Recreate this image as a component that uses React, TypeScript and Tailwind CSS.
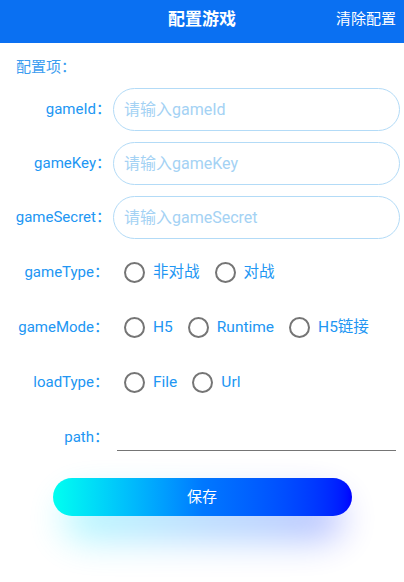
import React from "react";

const font = { fontFamily: 'Roboto, "Noto Sans CJK SC", sans-serif' };

function Radio({ label, mr }: { label: string; mr?: string }) {
  return (
    <div className={`flex items-center ${mr ?? ""}`}>
      <div className="w-[21px] h-[21px] rounded-full border-2 border-[#757575] shrink-0" />
      <span className="ml-[8px] text-[15.5px] text-[#2196f3] leading-none">{label}</span>
    </div>
  );
}

function InputRow({ label, placeholder }: { label: string; placeholder: string }) {
  return (
    <div className="flex items-center h-[43px]">
      <div className="w-[113px] text-right text-[15px] text-[#2196f3] whitespace-nowrap pr-[2px]">{label}：</div>
      <div className="mr-[4px] flex-1 h-full rounded-full border border-[#b3dbf7] flex items-center pl-[10px] text-[16px] text-[#a4d2f4]">
        {placeholder}
      </div>
    </div>
  );
}

export default function App() {
  return (
    <div className="w-[404px] h-[582px] bg-white overflow-hidden" style={font}>
      <div className="relative h-[43px] bg-[#0a70f2] flex items-center justify-center">
        <span className="text-white text-[17px] font-bold -mt-[4px]">配置游戏</span>
        <span className="absolute right-[8px] top-0 h-full flex items-center text-white text-[15px] -mt-[2px]">清除配置</span>
      </div>
      <div className="pl-[16px] pt-[14px] text-[15px] text-[#3a9cf0] leading-[20px]">配置项：</div>
      <div className="mt-[11px] flex flex-col gap-[11px]">
        <InputRow label="gameId" placeholder="请输入gameId" />
        <InputRow label="gameKey" placeholder="请输入gameKey" />
        <InputRow label="gameSecret" placeholder="请输入gameSecret" />
      </div>
      <div className="mt-[6px]">
        <div className="flex items-center h-[55px]">
          <div className="w-[113px] text-right text-[15px] text-[#2196f3] pr-[4px]">gameType：</div>
          <div className="flex items-center pl-[11px]">
            <Radio label="非对战" mr="mr-[15px]" />
            <Radio label="对战" />
          </div>
        </div>
        <div className="flex items-center h-[55px]">
          <div className="w-[113px] text-right text-[15px] text-[#2196f3] pr-[4px]">gameMode：</div>
          <div className="flex items-center pl-[11px]">
            <Radio label="H5" mr="mr-[15px]" />
            <Radio label="Runtime" mr="mr-[15px]" />
            <Radio label="H5链接" />
          </div>
        </div>
        <div className="flex items-center h-[55px]">
          <div className="w-[113px] text-right text-[15px] text-[#2196f3] pr-[4px]">loadType：</div>
          <div className="flex items-center pl-[11px]">
            <Radio label="File" mr="mr-[15px]" />
            <Radio label="Url" />
          </div>
        </div>
        <div className="flex items-center h-[55px]">
          <div className="w-[113px] text-right text-[15px] text-[#2196f3] pr-[4px]">path：</div>
          <div className="ml-[4px] mr-[8px] flex-1 h-[24px] mt-[2px] border-b border-[#757575]" />
        </div>
      </div>
      <div className="relative mt-[13px] mx-auto w-[299px] h-[38px]">
        <div className="absolute left-[10px] right-[10px] top-[18px] h-[44px] rounded-full bg-gradient-to-r from-[#00f0ff] via-[#0080ff] to-[#0000ff] blur-[18px] opacity-30" />
        <div className="relative h-full rounded-full bg-gradient-to-r from-[#00fff0] via-[#0078ff] to-[#0000ff] flex items-center justify-center text-white text-[15px]">
          保存
        </div>
      </div>
    </div>
  );
}
